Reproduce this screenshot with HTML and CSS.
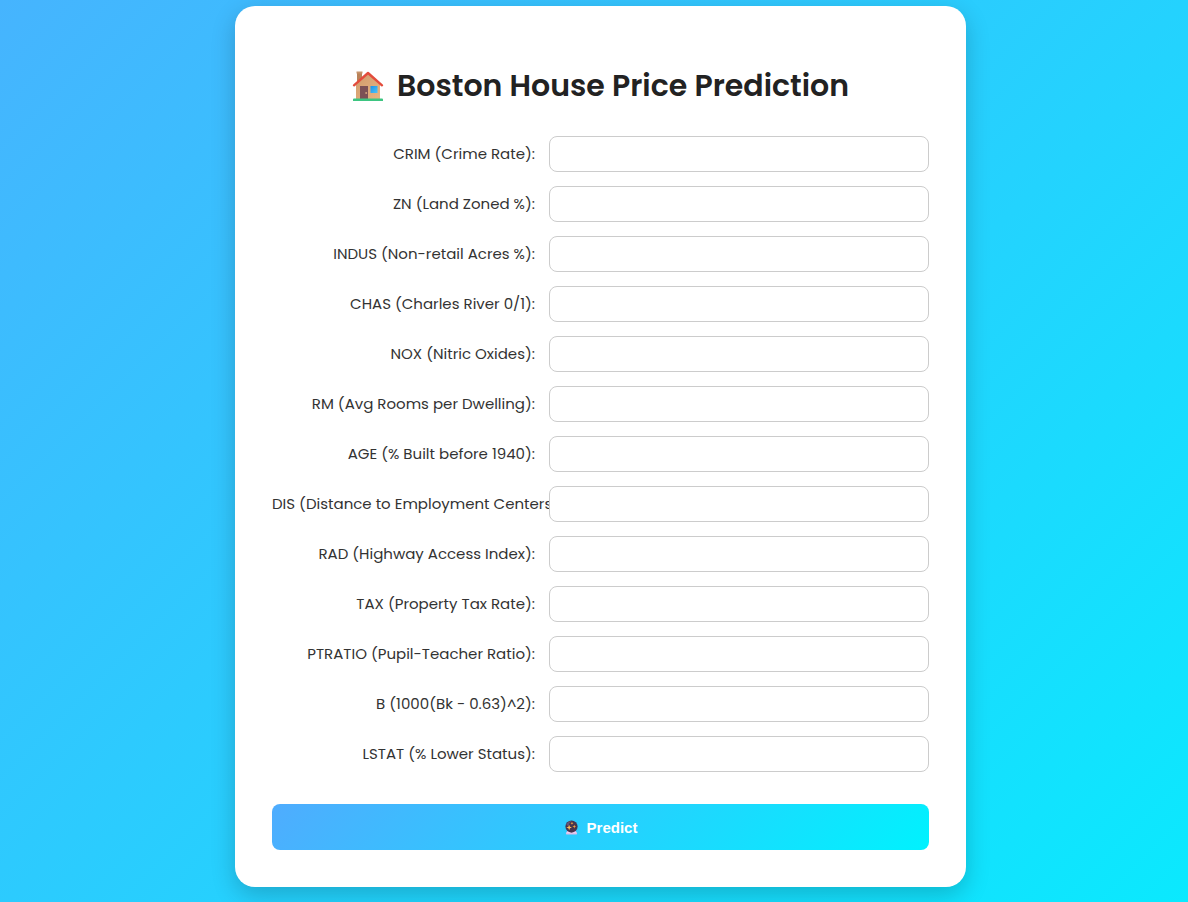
FILE: index.html
```html
<!DOCTYPE html>
<html lang="en">
<head>
<meta charset="utf-8">
<meta name="viewport" content="width=device-width, initial-scale=1">
<title>Boston House Price Prediction</title>
<link rel="stylesheet" href="styles.css">
</head>
<body>
<main class="card">
  <h1 class="title">
    <svg class="title-icon" viewBox="0 0 32 32" aria-hidden="true">
      <defs>
        <linearGradient id="wall" x1="0" y1="0" x2="1" y2="1"><stop offset="0" stop-color="#cf9a6c"/><stop offset="1" stop-color="#e9b481"/></linearGradient>
        <linearGradient id="pane" x1="0" y1="0" x2="1" y2="1"><stop offset="0" stop-color="#1d91e8"/><stop offset="1" stop-color="#4bc4f8"/></linearGradient>
      </defs>
      <path d="M5 3h5v10H5z" fill="#b98258"/>
      <path d="M4.500 1.500h6v2h-6z" fill="#c6936b"/>
      <path d="M4 14.500 16 3.500l12 11V29H4z" fill="url(#wall)"/>
      <path d="M8 16h8v13H8z" fill="#7c5055"/>
      <circle cx="14.200" cy="23" r="1" fill="#d4a27c"/>
      <path d="M18.500 16h7v7h-7z" fill="url(#pane)"/>
      <path d="M2 15.300 16 3l14 12.300" fill="none" stroke="#e34c3c" stroke-width="2.400" stroke-linecap="round" stroke-linejoin="round"/>
      <path d="M2 28.500h28a1 1 0 0 1 1 1V31H1v-1.500a1 1 0 0 1 1-1z" fill="#3dc581"/>
    </svg>
    <span>Boston House Price Prediction</span>
  </h1>
  <form class="form">
    <div class="row"><label for="crim">CRIM (Crime Rate):</label><input id="crim" type="text"></div>
    <div class="row"><label for="zn">ZN (Land Zoned %):</label><input id="zn" type="text"></div>
    <div class="row"><label for="indus">INDUS (Non-retail Acres %):</label><input id="indus" type="text"></div>
    <div class="row"><label for="chas">CHAS (Charles River 0/1):</label><input id="chas" type="text"></div>
    <div class="row"><label for="nox">NOX (Nitric Oxides):</label><input id="nox" type="text"></div>
    <div class="row"><label for="rm">RM (Avg Rooms per Dwelling):</label><input id="rm" type="text"></div>
    <div class="row"><label for="age">AGE (% Built before 1940):</label><input id="age" type="text"></div>
    <div class="row"><label for="dis">DIS (Distance to Employment Centers):</label><input id="dis" type="text"></div>
    <div class="row"><label for="rad">RAD (Highway Access Index):</label><input id="rad" type="text"></div>
    <div class="row"><label for="tax">TAX (Property Tax Rate):</label><input id="tax" type="text"></div>
    <div class="row"><label for="ptratio">PTRATIO (Pupil-Teacher Ratio):</label><input id="ptratio" type="text"></div>
    <div class="row"><label for="b">B (1000(Bk - 0.63)^2):</label><input id="b" type="text"></div>
    <div class="row"><label for="lstat">LSTAT (% Lower Status):</label><input id="lstat" type="text"></div>
    <button class="predict" type="submit">
      <svg class="predict-icon" viewBox="0 0 32 32" aria-hidden="true">
        <path d="M7 23h18l3 6a2 2 0 0 1-2 2H6a2 2 0 0 1-2-2z" fill="#d9b8e8"/>
        <path d="M6 26h20l1 2H5z" fill="#f0d9f6"/>
        <circle cx="16" cy="14" r="13" fill="#46364f"/>
        <path d="M5 10a13 13 0 0 1 12-8c-5 2-7 7-7 12z" fill="#665477"/>
        <path d="m11 10 1.600 4.400L17 16l-4.400 1.600L11 22l-1.600-4.400L5 16l4.400-1.600z" fill="#ffbd59"/>
        <path d="m22 10 1 3 3 1-3 1-1 3-1-3-3-1 3-1zM17 4l1 2 2 1-2 1-1 2-1-2-2-1 2-1z" fill="#f5a544"/>
      </svg>
      <span>Predict</span>
    </button>
  </form>
</main>
</body>
</html>
```
FILE: styles.css
```css
* {
  box-sizing: border-box;
}

body {
  margin: 0;
  min-height: 100vh;
  padding: 6px 0 15px 13px;
  background: linear-gradient(135deg, #4facfe -15%, #00f2fe 117%);
  font-family: Poppins, Inter, "Open Sans", sans-serif;
  color: #222;
}

.card {
  max-width: 731px;
  margin: 0 auto;
  padding: 57px 37px 37px;
  border-radius: 20px;
  background: #fff;
  box-shadow: 0 8px 25px rgba(0, 0, 0, 0.2);
}

.title {
  display: flex;
  align-items: center;
  justify-content: center;
  gap: 13px;
  margin: 0 0 27px;
  font-size: 30px;
  font-weight: 600;
  line-height: 46px;
}

.title-icon {
  width: 32px;
  height: 32px;
}

.form {
  display: flex;
  flex-direction: column;
  gap: 14px;
}

.row {
  display: grid;
  grid-template-columns: 263px minmax(0, 1fr);
  gap: 14px;
  align-items: center;
}

.row label {
  display: flex;
  justify-content: safe flex-end;
  font-size: 15px;
  line-height: 24px;
  color: #333;
  white-space: nowrap;
}

.row input {
  width: 100%;
  height: 36px;
  padding: 8px 12px;
  border: 1px solid #ccc;
  border-radius: 8px;
  background: #fff;
  font: inherit;
  font-size: 14px;
}

.predict {
  display: flex;
  align-items: center;
  justify-content: center;
  gap: 8px;
  height: 46px;
  margin-top: 18px;
  border: 0;
  border-radius: 8px;
  background: linear-gradient(135deg, #4facfe, #00f2fe);
  color: #fff;
  font-family: "Liberation Sans", Arial, sans-serif;
  font-size: 15px;
  font-weight: 700;
  cursor: pointer;
}

.predict-icon {
  width: 15px;
  height: 15px;
}
```
